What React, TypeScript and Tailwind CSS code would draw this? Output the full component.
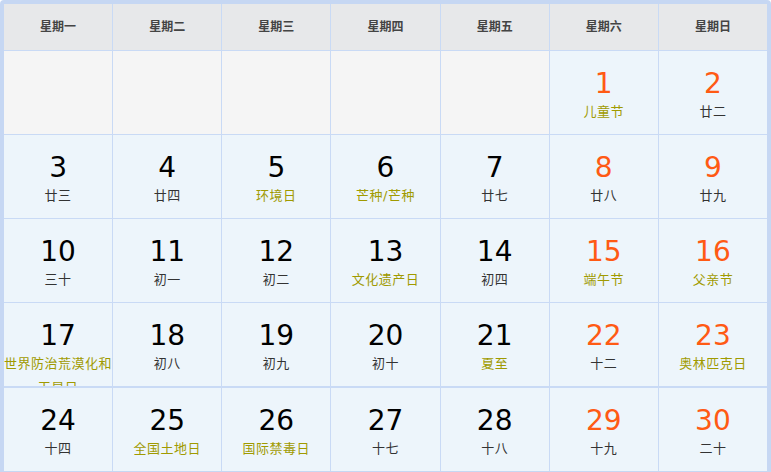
const head = ['星期一', '星期二', '星期三', '星期四', '星期五', '星期六', '星期日'];

type Day = { d: number; l: string; f?: boolean } | null;

const days: Day[] = [
  null, null, null, null, null,
  { d: 1, l: '儿童节', f: true }, { d: 2, l: '廿二' },
  { d: 3, l: '廿三' }, { d: 4, l: '廿四' }, { d: 5, l: '环境日', f: true }, { d: 6, l: '芒种/芒种', f: true }, { d: 7, l: '廿七' }, { d: 8, l: '廿八' }, { d: 9, l: '廿九' },
  { d: 10, l: '三十' }, { d: 11, l: '初一' }, { d: 12, l: '初二' }, { d: 13, l: '文化遗产日', f: true }, { d: 14, l: '初四' }, { d: 15, l: '端午节', f: true }, { d: 16, l: '父亲节', f: true },
  { d: 17, l: '世界防治荒漠化和干旱日', f: true }, { d: 18, l: '初八' }, { d: 19, l: '初九' }, { d: 20, l: '初十' }, { d: 21, l: '夏至', f: true }, { d: 22, l: '十二' }, { d: 23, l: '奥林匹克日', f: true },
  { d: 24, l: '十四' }, { d: 25, l: '全国土地日', f: true }, { d: 26, l: '国际禁毒日', f: true }, { d: 27, l: '十七' }, { d: 28, l: '十八' }, { d: 29, l: '十九' }, { d: 30, l: '二十' },
];

export default function App() {
  return (
    <div className="w-[771px] h-[472px] bg-white" style={{ fontFamily: '"DejaVu Sans", Verdana, "Noto Sans CJK SC", sans-serif' }}>
      <div className="border-4 border-[#c6d7f3] rounded-[4px] bg-[#c9daf5] grid grid-cols-7 gap-px">
        {head.map((h) => (
          <div key={h} className="h-[46px] bg-[#e7e8ea] flex items-center justify-center text-[12px] font-bold text-[#444]">
            {h}
          </div>
        ))}
        {days.map((c, i) => {
          const wk = i % 7 >= 5;
          const rowGap = i >= 28 && i < 35 ? 'mt-px' : '';
          if (!c) return <div key={i} className="h-[83px] bg-[#f5f5f5]" />;
          return (
            <div key={i} className={`h-[83px] bg-[#edf5fb] flex flex-col items-center pt-[17px] overflow-hidden ${rowGap}`}>
              <div className={`text-[28px] leading-[32px] ${wk ? 'text-[#ff5a14]' : 'text-black'}`}>{c.d}</div>
              <div className={`text-[13px] leading-[24px] text-center tracking-[0.5px] ${c.f ? 'text-[#a09a00]' : 'text-[#333]'}`}>{c.l}</div>
            </div>
          );
        })}
      </div>
    </div>
  );
}
